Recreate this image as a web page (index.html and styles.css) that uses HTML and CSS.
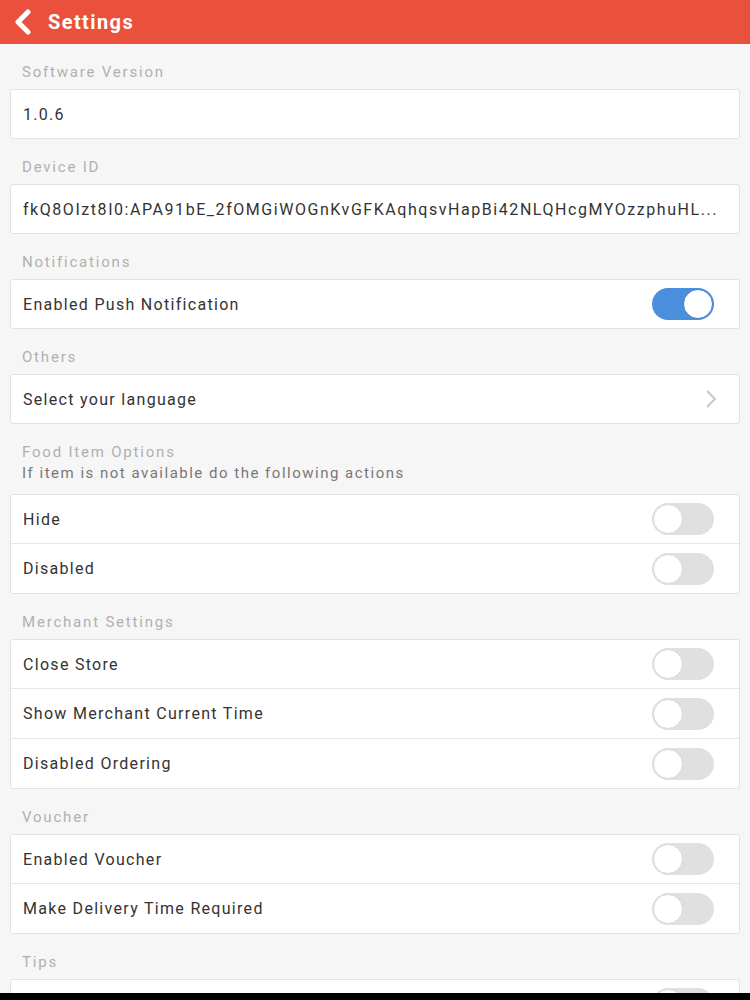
FILE: index.html
```html
<!DOCTYPE html>
<html lang="en">
<head>
    <meta charset="UTF-8">
    <meta name="viewport" content="width=device-width, initial-scale=1.0">
    <title>Settings</title>
    <link rel="stylesheet" href="styles.css">
</head>
<body>
    <header class="topbar">
        <svg class="back" width="22" height="26" viewBox="0 0 22 26">
            <path d="M16 3 L6 13 L16 23" fill="none" stroke="#fff" stroke-width="5" stroke-linecap="round" stroke-linejoin="round"/>
        </svg>
        <h1>Settings</h1>
    </header>
    <main>
        <div class="label">Software Version</div>
        <div class="card">
            <div class="row">1.0.6</div>
        </div>

        <div class="label">Device ID</div>
        <div class="card">
            <div class="row"><span class="devid">fkQ8OIzt8I0:APA91bE_2fOMGiWOGnKvGFKAqhqsvHapBi42NLQHcgMYOzzphuHL...</span></div>
        </div>

        <div class="label">Notifications</div>
        <div class="card">
            <div class="row">Enabled Push Notification <span class="toggle on"></span></div>
        </div>

        <div class="label">Others</div>
        <div class="card">
            <div class="row">Select your language
                <svg class="chev" width="14" height="20" viewBox="0 0 14 20">
                    <path d="M3 2 L11 10 L3 18" fill="none" stroke="#c8c8c8" stroke-width="2"/>
                </svg>
            </div>
        </div>

        <div class="label">Food Item Options
            <div class="sub">If item is not available do the following actions</div>
        </div>
        <div class="card">
            <div class="row">Hide <span class="toggle"></span></div>
            <div class="row">Disabled <span class="toggle"></span></div>
        </div>

        <div class="label">Merchant Settings</div>
        <div class="card">
            <div class="row">Close Store <span class="toggle"></span></div>
            <div class="row">Show Merchant Current Time <span class="toggle"></span></div>
            <div class="row">Disabled Ordering <span class="toggle"></span></div>
        </div>

        <div class="label">Voucher</div>
        <div class="card">
            <div class="row">Enabled Voucher <span class="toggle"></span></div>
            <div class="row">Make Delivery Time Required <span class="toggle"></span></div>
        </div>

        <div class="label">Tips</div>
        <div class="card">
            <div class="row"><span></span><span class="toggle"></span></div>
        </div>
    </main>
    <div class="navbar"></div>
</body>
</html>
```

FILE: styles.css
```css
body {
    font-family: Roboto, "Liberation Sans", sans-serif;
    background-color: #f7f6f6;
    color: #333;
    margin: 0;
    padding: 0;
    height: 1000px;
    overflow: hidden;
}
.topbar {
    background-color: #ea513d;
    height: 44px;
    display: flex;
    align-items: center;
    padding-left: 12px;
}
.topbar h1 {
    margin: 0 0 0 14px;
    color: white;
    font-size: 20px;
    font-weight: bold;
    letter-spacing: 1.4px;
}
.back {
    display: block;
}
main {
    padding: 0 10px;
}
.label {
    color: #b0b0b0;
    font-size: 15px;
    line-height: 18px;
    letter-spacing: 1.8px;
    padding: 19px 12px 8px;
}
.sub {
    color: #777;
    letter-spacing: 1.5px;
    margin: 3px 0 4px;
}
.card {
    background: #fff;
    border: 1px solid #e2e2e2;
    border-radius: 3px;
}
.row {
    height: 49px;
    display: flex;
    align-items: center;
    justify-content: space-between;
    padding: 0 25px 0 12px;
    font-size: 16px;
    letter-spacing: 1.3px;
    border-top: 1px solid #e8e8e8;
}
.row:first-child {
    border-top: none;
    height: 48px;
}
.devid {
    white-space: nowrap;
    letter-spacing: 1.55px;
}
.toggle {
    position: relative;
    width: 62px;
    height: 32px;
    border-radius: 16px;
    background: #e0e0e0;
    flex-shrink: 0;
}
.toggle::after {
    content: "";
    position: absolute;
    left: 1px;
    top: 1px;
    width: 28px;
    height: 28px;
    border-radius: 50%;
    background: #fff;
    border: 1px solid #d8d8d8;
}
.toggle.on {
    background: #4a8fdc;
}
.toggle.on::after {
    left: auto;
    right: 1px;
    border-color: #3d7fcc;
}
.chev {
    margin-right: -4px;
}
.navbar {
    position: fixed;
    left: 0;
    right: 0;
    bottom: 0;
    height: 7px;
    background: #000;
}
```
